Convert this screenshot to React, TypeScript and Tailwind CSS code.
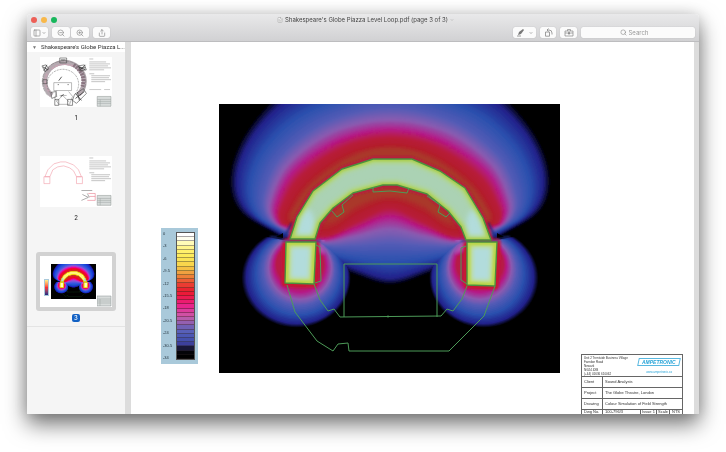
import { ChevronDown, FileText, PanelLeft, Search, Share, ZoomIn, ZoomOut } from "lucide-react";
import { useId } from "react";

type Point = [number, number];
type Contour = { color: string; points: Point[] };
type Ring = { color: string; cx: number; cy: number; rx: number; ry: number };

const AXIS = 390;

// left half of each contour, from the top of the field round to its underside
const FIELD: Contour[] = [
  { color: "#000000", points: [[390, 56], [300, 78], [252, 122], [230, 170], [238, 210], [281, 237], [325, 262], [352, 274], [390, 285]] },
  { color: "#22228c", points: [[390, 66], [303, 91], [258, 128], [237, 173], [245, 209], [283, 235], [328, 257], [355, 269], [390, 279]] },
  { color: "#2a50ae", points: [[390, 88], [311, 108], [267, 143], [249, 182], [256, 214], [285, 233], [325, 252], [355, 260], [390, 264]] },
  { color: "#575cb6", points: [[390, 108], [326, 122], [281, 156], [264, 192], [266, 216], [286, 231], [322, 245], [355, 246], [390, 244]] },
  { color: "#8b5bb0", points: [[390, 119], [332, 131], [288, 163], [270, 199], [272, 219], [287, 230], [322, 242], [355, 237], [390, 230]] },
  { color: "#b51a87", points: [[390, 129], [338, 140], [294, 170], [276, 204], [278, 222], [288, 228], [322, 240], [357, 229], [390, 218]] },
  { color: "#b71b3a", points: [[390, 137], [343, 147], [300, 176], [281, 208], [281, 222], [289, 226], [324, 237], [358, 222], [390, 209]] },
  { color: "#b41c2c", points: [[390, 144], [348, 153], [307, 181], [287, 211], [286, 221], [291, 224], [328, 231], [358, 213], [390, 202]] },
  { color: "#a83e2c", points: [[390, 150], [352, 159], [313, 186], [295, 210], [294, 216], [296, 219], [334, 217], [358, 202], [390, 194]] },
];

const SIDE: Ring[] = [
  { color: "#000000", cx: 296, cy: 278, rx: 55, ry: 50 },
  { color: "#22228c", cx: 297, cy: 277, rx: 51, ry: 47 },
  { color: "#2a50ae", cx: 298, cy: 274, rx: 43, ry: 42 },
  { color: "#575cb6", cx: 299, cy: 270, rx: 36, ry: 36 },
  { color: "#8b5bb0", cx: 300, cy: 268, rx: 32, ry: 32 },
  { color: "#b51a87", cx: 300, cy: 266, rx: 27, ry: 27 },
  { color: "#b71b3a", cx: 300, cy: 264, rx: 23, ry: 21 },
];

const ARCH =
  "M290 239L297 217L313 191L342 169L373 159H412L440 171L465 188L483 218L491 240H466L461 227L448 211L427 194L397 185H383L353 193L333 208L320 223L315 239Z";
const LEFT_LEG = "M286 242H316L314 284L285 283Z";
const RIGHT_LEG = "M467 242H497L495 286L467 285Z";
const STEPS = 6;

const mix = (a: number, b: number, t: number) => a + (b - a) * t;

function mixColor(a: string, b: string, t: number) {
  const channel = (hex: string, i: number) => parseInt(hex.slice(1 + i * 2, 3 + i * 2), 16);
  return `rgb(${[0, 1, 2].map((i) => Math.round(mix(channel(a, i), channel(b, i), t))).join(",")})`;
}

// closed Catmull-Rom curve, mirrored on the vertical axis
function smoothPath(half: Point[]) {
  const mirrored = half
    .slice(1, -1)
    .reverse()
    .map(([x, y]): Point => [AXIS * 2 - x, y]);
  const all = [...half, ...mirrored];
  const at = (i: number) => all[(i + all.length) % all.length];
  let d = `M${all[0].join(" ")}`;
  all.forEach((p, i) => {
    const prev = at(i - 1);
    const next = at(i + 1);
    const after = at(i + 2);
    d += `C${p[0] + (next[0] - prev[0]) / 6} ${p[1] + (next[1] - prev[1]) / 6} ${next[0] - (after[0] - p[0]) / 6} ${next[1] - (after[1] - p[1]) / 6} ${next[0]} ${next[1]}`;
  });
  return d + "Z";
}

const fieldLayers = FIELD.slice(0, -1).flatMap((from, i) => {
  const to = FIELD[i + 1];
  return Array.from({ length: STEPS }, (_, s) => {
    const t = s / STEPS;
    const points = from.points.map(([x, y], k): Point => [mix(x, to.points[k][0], t), mix(y, to.points[k][1], t)]);
    return { color: mixColor(from.color, to.color, t), d: smoothPath(points) };
  });
});

const sideLayers = SIDE.slice(0, -1).flatMap((from, i) => {
  const to = SIDE[i + 1];
  return Array.from({ length: STEPS }, (_, s) => {
    const t = s / STEPS;
    return {
      fill: mixColor(from.color, to.color, t),
      cx: mix(from.cx, to.cx, t),
      cy: mix(from.cy, to.cy, t),
      rx: mix(from.rx, to.rx, t),
      ry: mix(from.ry, to.ry, t),
    };
  });
});

function FieldMap({ className, bright }: { className?: string; bright?: boolean }) {
  const id = useId();
  const core = bright ? "#fff6a0" : "#abd2b4";
  const legCore = bright ? "#fffbd0" : "#b2dcdc";

  return (
    <svg viewBox="219 104 341 269" className={className} role="img" aria-label="Field strength simulation">
      <defs>
        <filter id={`${id}s`} x="-10%" y="-10%" width="120%" height="120%">
          <feGaussianBlur stdDeviation="1" />
        </filter>
        <filter id={`${id}m`} x="-20%" y="-20%" width="140%" height="140%">
          <feGaussianBlur stdDeviation="2.500" />
        </filter>
        <clipPath id={`${id}l`}>
          <path d="M219 239L262 236L284 240H325L355 262V373H219Z" />
        </clipPath>
        <clipPath id={`${id}a`}>
          <path d={ARCH} />
        </clipPath>
        <clipPath id={`${id}g`}>
          <path d={LEFT_LEG + RIGHT_LEG} />
        </clipPath>
      </defs>
      <rect x="219" y="104" width="341" height="269" fill="#000" />
      <g filter={`url(#${id}s)`}>
        {fieldLayers.map((layer, i) => (
          <path key={i} d={layer.d} fill={layer.color} />
        ))}
      </g>
      {[undefined, "translate(780 0) scale(-1 1)"].map((transform, i) => (
        <g key={i} transform={transform}>
          <g clipPath={`url(#${id}l)`} style={{ mixBlendMode: "lighten" }}>
            {sideLayers.map((layer, k) => (
              <ellipse key={k} {...layer} />
            ))}
          </g>
          <path d="M270 237L284 238L292 223" fill="none" stroke="#1d2a80" strokeWidth="2" filter={`url(#${id}s)`} />
          <path d="M276 237L283 233V238Z" fill="#000" />
        </g>
      ))}
      <g fill="none" strokeLinejoin="round" filter={`url(#${id}s)`}>
        <path d={ARCH} stroke="#b81a40" strokeWidth="5" />
        <path d={LEFT_LEG + RIGHT_LEG} stroke="#c81830" strokeWidth="7" />
        <path d="M282 241H321M461 241H499" stroke="#2a3a90" strokeWidth="2" />
      </g>
      <path d="M290 240H316M466 240H492" stroke="#a03a30" />
      <path d={ARCH} fill={core} />
      <path d={LEFT_LEG + RIGHT_LEG} fill={legCore} />
      <g clipPath={`url(#${id}a)`}>
        <ellipse cx="305" cy="228" rx="10" ry="20" fill="#b2dcdc" filter={`url(#${id}m)`} />
        <ellipse cx="476" cy="228" rx="10" ry="20" fill="#b2dcdc" filter={`url(#${id}m)`} />
        <path d={ARCH} fill="none" stroke={bright ? "#ffe030" : "#b4d860"} strokeWidth="7" filter={`url(#${id}m)`} />
        <path d={ARCH} fill="none" stroke={bright ? "#ffe030" : "#a8cc50"} strokeWidth="4" filter={`url(#${id}s)`} />
      </g>
      <g clipPath={`url(#${id}g)`}>
        <path d={LEFT_LEG + RIGHT_LEG} fill="none" stroke={bright ? "#ffe030" : "#c6dc60"} strokeWidth="9" filter={`url(#${id}m)`} />
        <path d={LEFT_LEG + RIGHT_LEG} fill="none" stroke={bright ? "#ffe030" : "#b8d648"} strokeWidth="6" filter={`url(#${id}s)`} />
      </g>
      <path d={ARCH + LEFT_LEG + RIGHT_LEG} fill="none" stroke="#4b8f3e" strokeWidth="1.400" strokeLinejoin="round" />
      <g fill="none" stroke="#4d9b58" strokeWidth="1">
        <path d="M344 317V264H437V317" />
        <path d="M287 285L295 312L317 341L333 351L338 344L348 343L349 351H449L484 316L495 286" />
        <path d="M314 284L320 300L328 311L334 309L340 317L441 316L447 309L453 311L462 299L467 286" />
        <path d="M316 245L320 247L321 281L315 283M466 246L461 248V280L467 284" />
        <path d="M332 211L337 217L344 212L342 205M440 205L438 212L446 217L450 213M373 187V192L390 191L407 193L409 188M342 205L353 195M427 196L440 205" />
      </g>
      <circle cx="388" cy="316.500" r="1" fill="#4d9b58" />
    </svg>
  );
}

const SCALE_COLORS = [
  "#ffffff", "#fffef0", "#fffbb8", "#fff58c", "#fff06c", "#fdec5c", "#fae456", "#f8d64c", "#f4c044", "#f0a040",
  "#ee8038", "#ec5c34", "#ea3c32", "#ea2430", "#ec1a38", "#ec1a50", "#ec1c70", "#e8248c", "#dc3c9c", "#d050a4",
  "#b85cac", "#9460b0", "#7060b4", "#5860b8", "#4c58b4", "#4450ac", "#3c409c", "#181838", "#040408", "#000000",
];
const SCALE_LABELS = ["0", "-3", "-6", "-9.5", "-12", "-15.5", "-18", "-20.5", "-24", "-30.5", "-34"];

function ScaleLegend() {
  return (
    <div className="flex h-[136px] w-[37px] shrink-0 justify-between bg-[#a9c9da] py-1 pr-[3px] pl-[2px]">
      <ul className="flex flex-col justify-between text-[4px] leading-[4px] text-[#24343e]">
        {SCALE_LABELS.map((label) => (
          <li key={label}>{label}</li>
        ))}
      </ul>
      <div className="flex w-[19px] flex-col border border-[#555]">
        {SCALE_COLORS.map((color) => (
          <span key={color} className="flex-1 shadow-[inset_0_-1px_0_rgba(40,30,30,0.4)]" style={{ backgroundColor: color }} />
        ))}
      </div>
    </div>
  );
}

function TitleBlock() {
  return (
    <table className="w-full table-fixed border-collapse text-left text-[4px] leading-[4px] text-[#333] [&_td]:border [&_td]:border-[#666] [&_td]:px-[2px] [&_th]:border [&_th]:border-[#666] [&_th]:px-[2px] [&_th]:font-normal">
      <colgroup>
        <col className="w-[21px]" />
        <col className="w-[38px]" />
        <col className="w-[16px]" />
        <col className="w-[13px]" />
        <col />
      </colgroup>
      <tbody>
        <tr className="h-[22px]">
          <td colSpan={5}>
            <div className="flex items-start justify-between">
              <address className="text-[3px] whitespace-nowrap not-italic">
                Unit 2 Trentside Business Village
                <br />
                Farndon Road
                <br />
                Newark
                <br />
                NG24 4XB
                <br />
                (+44) 01636 610062
              </address>
              <div className="flex flex-col items-center gap-1 pt-[2px] text-[#28a4d8]">
                <div className="-skew-x-12 border border-[#58b8e0]">
                  <b className="block skew-x-12 px-[3px] text-[5px] leading-[6px] italic">AMPETRONIC</b>
                </div>
                <a href="#ampetronic" className="text-[3px]">
                  www.ampetronic.co
                </a>
              </div>
            </div>
          </td>
        </tr>
        {[
          ["Client", "Sound Analysts"],
          ["Project", "The Globe Theatre, London"],
          ["Drawing", "Colour Simulation of Field Strength"],
        ].map(([name, value]) => (
          <tr key={name} className="h-[11px]">
            <th>{name}</th>
            <td colSpan={4}>{value}</td>
          </tr>
        ))}
        <tr className="h-[7px] align-top whitespace-nowrap">
          <th>Dwg No.</th>
          <td>100-796/3</td>
          <td className="!px-px">Issue 1</td>
          <td className="!px-px">Scale</td>
          <td>NTS</td>
        </tr>
      </tbody>
    </table>
  );
}

// notes column and title stamp that every drawing sheet carries
function SheetNotes() {
  return (
    <g>
      <path d="M50 2H54M50 5H67M50 7H71M50 9H69M50 11H72M50 13H65M50 17H55M52 19H71M52 21H70M52 23H72M52 25H66" stroke="#aaa" strokeWidth="0.7" />
      <path d="M58 40H72V50H58Z" fill="#d8dcdb" stroke="#8b9391" strokeWidth="0.5" />
      <path d="M58 43H72M58 45H72M58 47H72M61 43V50" stroke="#9aa19f" strokeWidth="0.5" />
    </g>
  );
}

function PlanThumb() {
  return (
    <svg viewBox="0 0 73 51" className="block w-full bg-white" role="img" aria-label="Site plan">
      <SheetNotes />
      <g fill="none">
        <path d="M12 39A20 19 0 1 1 39 38" stroke="#b5a9b0" strokeWidth="5" />
        <path d="M9 35A20 19 0 0 1 7 17M12 12A20 19 0 0 1 35 10" stroke="#c9a5b4" strokeWidth="1.500" strokeDasharray="3 1" />
        <path d="M34 8Q47 17 43 30" stroke="#8a7480" strokeWidth="4" strokeDasharray="2 1" />
        <path d="M10 36A16 15 0 1 1 37 35" stroke="#777" strokeWidth="0.6" strokeDasharray="2 1" />
        <path d="M8 39A22 21 0 1 1 43 36" stroke="#777" strokeWidth="0.5" strokeDasharray="4 1" />
        <path d="M14 26H32V34H14ZM17 34L15 42L19 48H30L33 40L29 35M20 39H27M17 45L23 39L30 46" stroke="#777" strokeWidth="0.5" />
        <path d="M20 1H27V6H20ZM2 9L6 8L9 12L5 15ZM39 9L45 8L47 13L41 14ZM3 23H7V27H3ZM11 36L16 35L17 40L12 42ZM35 38L44 32L47 37L37 47L33 44ZM15 43H19V49H15ZM28 43H33V49H28Z" stroke="#444" strokeWidth="0.6" />
        <path d="M3 10L8 13M4 14L7 8M39 10L46 13M40 14L46 8M38 36L40 44" stroke="#333" strokeWidth="0.8" />
        <path d="M19 24L22 20M18 28H19M28 28H29M21 3H26M41 11H46M21 40L24 38M36 42L45 35M36 37L42 44" stroke="#333" strokeWidth="0.8" />
        <path d="M50 33H62M65 33H71" stroke="#aaa" strokeWidth="0.6" />
      </g>
    </svg>
  );
}

function LoopThumb() {
  return (
    <svg viewBox="0 0 73 51" className="block w-full bg-white" role="img" aria-label="Loop layout">
      <SheetNotes />
      <g fill="none" strokeWidth="0.6">
        <path d="M5 21L8 14L14 8L21 6H26L34 9L39 14L42 21H37L34 15L30 12L24 10L18 11L13 14L10 21ZM4 21H10V28H4ZM37 21H43V28H37Z" stroke="#f29aa6" />
        <path d="M49 38H56V45H48M50 41H56" stroke="#e87a8c" />
        <path d="M42 35H53M43 39L49 42L42 45M48 38L50 42" stroke="#777" />
      </g>
    </svg>
  );
}

function SimulationThumb() {
  return (
    <div className="flex aspect-[73/51] items-start bg-white pt-[8px] pl-[4px]">
      <div className="mt-[15px] h-[17px] w-[5px] border border-[#a9c9da] bg-linear-to-b from-yellow-200 via-red-500 to-[#222080]" />
      <FieldMap className="ml-[2px] w-[45px] saturate-150" bright />
      <svg viewBox="58 39 15 12" className="mt-[31px] ml-px w-[15px]" aria-hidden="true">
        <SheetNotes />
      </svg>
    </div>
  );
}

const pages = [
  { number: 1, Thumb: PlanThumb },
  { number: 2, Thumb: LoopThumb },
  { number: 3, Thumb: SimulationThumb },
];

function Sidebar() {
  return (
    <aside className="flex w-[98px] shrink-0 flex-col bg-[#f5f5f5]">
      <h2 className="flex h-[10px] items-center gap-1 bg-white pl-[5px] font-['Roboto',sans-serif] text-[6px] leading-[10px] whitespace-nowrap text-[#333]">
        <span className="text-[5px] text-[#777]">▼</span>
        Shakespeare's Globe Piazza L...
      </h2>
      <nav className="flex flex-col gap-[30px] border-b border-[#e4e4e4] px-[9px] pt-px pb-[4px]">
        {pages.map(({ number, Thumb }) => {
          const selected = number === 3;
          return (
            <button key={number} type="button" aria-current={selected ? "page" : undefined} className="flex flex-col items-center gap-[3px]">
              <span className={`block w-full rounded-[3px] p-[4px] ${selected ? "bg-[#d2d2d2]" : ""}`}>
                <Thumb />
              </span>
              <span className={`rounded-[2px] px-[2px] text-[6px] leading-[8px] font-medium ${selected ? "bg-[#1261c4] text-white" : "text-[#333]"}`}>
                {number}
              </span>
            </button>
          );
        })}
      </nav>
    </aside>
  );
}

const toolButton = "flex h-[11px] items-center justify-center rounded-[2px] bg-[#fbfbfb] text-[#888] shadow-[0_0_1px_rgba(0,0,0,0.25)]";

function TitleBar() {
  return (
    <header className="flex h-[28px] flex-col justify-between rounded-t-[4px] border-b border-[#bdbdbf] bg-linear-to-b from-[#e9e9ea] to-[#d1d1d3] px-[4px] pb-[3px]">
      <div className="grid h-[12px] grid-cols-[1fr_auto_1fr] items-center">
        <div className="flex gap-[4px]">
          <button type="button" aria-label="Close" className="size-[6px] rounded-full bg-[#ed5f57]" />
          <button type="button" aria-label="Minimise" className="size-[6px] rounded-full bg-[#f8b84a]" />
          <button type="button" aria-label="Zoom" className="size-[6px] rounded-full bg-[#18b75c]" />
        </div>
        <h1 className="flex items-center gap-[2px] pl-[5px] text-[6px] leading-[12px] text-[#444]">
          <FileText className="size-[6px] fill-white text-[#999]" />
          Shakespeare's Globe Piazza Level Loop.pdf (page 3 of 3)
          <ChevronDown className="size-[4px] text-[#888]" />
        </h1>
      </div>
      <div className="flex items-center">
        <button type="button" aria-label="View" className={`${toolButton} w-[17px] gap-px`}>
          <PanelLeft className="size-[8px]" />
          <ChevronDown className="size-[4px]" strokeWidth={4} />
        </button>
        <div className="ml-[4px] flex gap-px">
          <button type="button" aria-label="Zoom out" className={`${toolButton} w-[18px]`}>
            <ZoomOut className="size-[8px]" />
          </button>
          <button type="button" aria-label="Zoom in" className={`${toolButton} w-[18px]`}>
            <ZoomIn className="size-[8px]" />
          </button>
        </div>
        <button type="button" aria-label="Share" className={`${toolButton} ml-[4px] w-[17px]`}>
          <Share className="size-[8px]" />
        </button>
        <div className="ml-auto flex items-center gap-[4px]">
          <button type="button" aria-label="Highlight" className={`${toolButton} w-[23px] gap-[4px]`}>
            <svg viewBox="0 0 9 9" className="size-[9px]" fill="none">
              <path d="M2 7L3 4L7 1L8 2L5 6Z" fill="#777" />
              <path d="M1 8H5" stroke="#999" />
            </svg>
            <ChevronDown className="size-[4px]" strokeWidth={4} />
          </button>
          <button type="button" aria-label="Rotate" className={`${toolButton} w-[16px]`}>
            <svg viewBox="0 0 9 9" className="size-[9px]" fill="none" stroke="#888" strokeWidth="0.800">
              <path d="M1.500 4H5.500V8.200H1.500ZM3 2H5Q8 2 8 5V6.500M4.500 0.500L3 2L4.500 3.500" />
            </svg>
          </button>
          <button type="button" aria-label="Markup toolbox" className={`${toolButton} w-[17px]`}>
            <svg viewBox="0 0 10 9" className="h-[9px] w-[10px]" fill="none" stroke="#888" strokeWidth="0.700">
              <path d="M1 3H9V8H1ZM3.500 3V1.500H6.500V3M1 5H3.500M6.500 5H9" />
              <circle cx="5" cy="5.200" r="1" fill="#888" />
            </svg>
          </button>
          <label className={`${toolButton} w-[114px] gap-[2px]`}>
            <Search className="size-[7px]" />
            <input type="search" aria-label="Search" placeholder="Search" className="w-[28px] appearance-none bg-transparent text-[6px] leading-[10px] outline-none placeholder:text-[#999] [&::-webkit-search-cancel-button]:hidden" />
          </label>
        </div>
      </div>
    </header>
  );
}

export default function App() {
  return (
    <div className="flex h-screen flex-col overflow-hidden bg-white px-[27px] pt-[14px] pb-[38px] font-['Inter','Liberation_Sans',sans-serif]">
      <div className="flex min-h-0 flex-1 flex-col rounded-t-[4px] shadow-[0_10px_22px_rgba(0,0,0,0.55),0_0_14px_rgba(0,0,0,0.12)]">
        <TitleBar />
        <div className="flex min-h-0 flex-1 overflow-hidden bg-[#dcdcdc]">
          <Sidebar />
          <main className="mr-[5px] ml-[6px] flex min-w-0 flex-1 items-start gap-[21px] bg-white pt-[62px] pr-[11px] pl-[30px] font-['Liberation_Sans',sans-serif]">
            <div className="mt-[124px]">
              <ScaleLegend />
            </div>
            <FieldMap className="block min-w-0 flex-1" />
            <div className="mt-[250px] w-[102px] shrink-0">
              <TitleBlock />
            </div>
          </main>
        </div>
      </div>
    </div>
  );
}
